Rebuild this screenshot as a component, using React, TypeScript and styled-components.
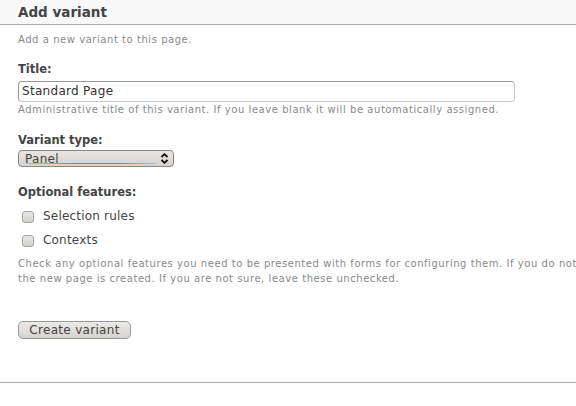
import React from "react";
import styled, { createGlobalStyle } from "styled-components";

const Global = createGlobalStyle`
  html, body { margin: 0; padding: 0; background: #fff; }
  body { font-family: "DejaVu Sans", Verdana, sans-serif; color: #333; }
`;

const Page = styled.div`
  width: 576px;
  height: 406px;
  overflow: hidden;
  display: flex;
  flex-direction: column;
`;

const Header = styled.div`
  height: 25px;
  flex: none;
  background: #f8f8f8;
  border-bottom: 1px solid #aaa;
  display: flex;
  align-items: center;
  padding: 0 0 1px 18px;
  box-sizing: border-box;
`;

const HeaderTitle = styled.h1`
  margin: 0;
  font-size: 13.5px;
  font-weight: bold;
  color: #444;
`;

const Body = styled.div`
  padding: 7px 0 0 18px;
  display: flex;
  flex-direction: column;
  border-bottom: 1px solid #aaa;
  height: 358px;
  flex: none;
  box-sizing: border-box;
  overflow: hidden;
`;

const Muted = styled.p<{ $mt?: number }>`
  margin: ${(p) => p.$mt ?? 0}px 0 0;
  font-size: 10px;
  letter-spacing: 0.55px;
  line-height: 15px;
  color: #8a8a8a;
  white-space: nowrap;
`;

const Label = styled.div<{ $mt: number }>`
  margin-top: ${(p) => p.$mt}px;
  font-size: 11.5px;
  font-weight: bold;
  color: #444;
  line-height: 15px;
`;

const TextInput = styled.div`
  margin-top: 4px;
  width: 497px;
  height: 21px;
  box-sizing: border-box;
  border: 1px solid #c8c8c8;
  border-top-color: #999;
  border-left-color: #999;
  border-radius: 4px;
  padding-left: 3px;
  font-size: 12px;
  letter-spacing: 0.3px;
  line-height: 19px;
  color: #333;
`;

const Select = styled.div`
  margin-top: 2px;
  width: 156px;
  height: 17px;
  box-sizing: border-box;
  border: 1px solid #888;
  border-radius: 4px;
  background: linear-gradient(#e8e6e3, #d6d3cf);
  display: flex;
  align-items: center;
  justify-content: space-between;
  padding: 0 4px 0 6px;
  position: relative;
  font-size: 12px;
  letter-spacing: 0.3px;
  color: #444;
`;

const FocusLine = styled.span`
  position: absolute;
  left: 7px;
  right: 16px;
  bottom: 2px;
  height: 1px;
  background: linear-gradient(90deg, rgba(74, 144, 217, 0.3), #4a90d9 40%, #4a90d9 70%, rgba(74, 144, 217, 0.3));
`;

const CheckRow = styled.label<{ $mt: number }>`
  margin-top: ${(p) => p.$mt}px;
  margin-left: 4px;
  display: flex;
  align-items: center;
  gap: 9px;
  font-size: 12px;
  letter-spacing: 0.2px;
  color: #444;
  line-height: 15px;
`;

const Box = styled.span`
  width: 12px;
  height: 12px;
  box-sizing: border-box;
  border: 1px solid #a5a5a5;
  border-radius: 3px;
  background: linear-gradient(#e8e7e5, #d3d1ce);
`;

const Button = styled.button`
  margin-top: 35px;
  align-self: flex-start;
  width: 113px;
  height: 18px;
  box-sizing: border-box;
  border: 1px solid #999;
  border-radius: 5px;
  background: linear-gradient(#eceae7, #d6d3cf);
  font-family: "DejaVu Sans", Verdana, sans-serif;
  font-size: 12px;
  letter-spacing: 0.3px;
  color: #444;
  padding: 0;
  line-height: 16px;
`;

const Chevrons = () => (
  <svg width="9" height="11" viewBox="0 0 9 11">
    <path d="M1.5 4 L4.5 1.2 L7.5 4" fill="none" stroke="#111" strokeWidth="1.8" />
    <path d="M1.5 7 L4.5 9.8 L7.5 7" fill="none" stroke="#111" strokeWidth="1.8" />
  </svg>
);

export default function App() {
  return (
    <Page>
      <Global />
      <Header>
        <HeaderTitle>Add variant</HeaderTitle>
      </Header>
      <Body>
        <Muted>Add a new variant to this page.</Muted>
        <Label $mt={15}>Title:</Label>
        <TextInput>Standard Page</TextInput>
        <Muted>Administrative title of this variant. If you leave blank it will be automatically assigned.</Muted>
        <Label $mt={16}>Variant type:</Label>
        <Select>
          <span>Panel</span>
          <Chevrons />
          <FocusLine />
        </Select>
        <Label $mt={18}>Optional features:</Label>
        <CheckRow $mt={9}>
          <Box />
          Selection rules
        </CheckRow>
        <CheckRow $mt={9}>
          <Box />
          Contexts
        </CheckRow>
        <Muted $mt={8}>
          Check any optional features you need to be presented with forms for configuring them. If you do not check them here you will still be able to utilize these features once
        </Muted>
        <Muted>the new page is created. If you are not sure, leave these unchecked.</Muted>
        <Button>Create variant</Button>
      </Body>
    </Page>
  );
}
